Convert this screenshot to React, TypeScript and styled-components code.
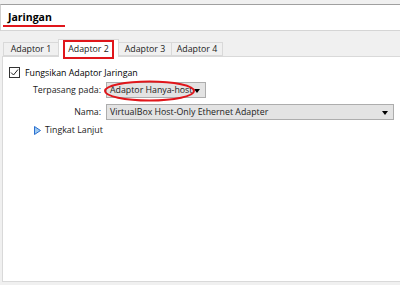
import React from "react";
import styled, { createGlobalStyle } from "styled-components";

const Global = createGlobalStyle`
  html, body { margin: 0; padding: 0; background: #f0f0f0; }
  body { font-family: "Open Sans", "Liberation Sans", sans-serif; font-size: 8.8px; color: #000; }
  * { box-sizing: border-box; }
`;

const Page = styled.div`
  width: 400px;
  height: 285px;
  display: flex;
  flex-direction: column;
  padding-top: 4px;
  overflow: hidden;
  white-space: nowrap;
`;

const Header = styled.div`
  height: 27px;
  background: #fff;
  border-top: 1px solid #a0a0a0;
  border-left: 1px solid #d0d0d0;
  border-bottom: 1px solid #d5d5d5;
  display: flex;
  align-items: center;
  padding-left: 7px;
`;

const Title = styled.span`
  position: relative;
  font-weight: 700;
  font-size: 10.5px;
  margin-top: -2px;
  &::after {
    content: "";
    position: absolute;
    left: -5px;
    right: -13px;
    bottom: -3px;
    height: 2px;
    background: #e0161b;
  }
`;

const TabStrip = styled.div`
  height: 25px;
  display: flex;
  align-items: flex-end;
  padding-left: 4px;
  position: relative;
  z-index: 1;
`;

const Tab = styled.div<{ $active?: boolean; $w: number }>`
  width: ${(p) => p.$w}px;
  height: ${(p) => (p.$active ? 18 : 14)}px;
  margin-bottom: ${(p) => (p.$active ? -1 : 0)}px;
  background: ${(p) => (p.$active ? "#fff" : "#f0f0f0")};
  border: 1px solid #d9d9d9;
  border-bottom: ${(p) => (p.$active ? "none" : "1px solid #d9d9d9")};
  margin-left: -1px;
  display: flex;
  align-items: center;
  justify-content: center;
  color: #222;
`;

const Marked = styled.span`
  border: 2px solid #e0161b;
  padding: 0 3px;
  line-height: 15px;
  margin-top: 1px;
`;

const Pane = styled.div`
  flex: 1;
  margin-left: 2px;
  margin-bottom: 3px;
  background: #fff;
  border: 1px solid #d9d9d9;
  border-right: none;
  padding: 9px 0 0 6px;
  display: flex;
  flex-direction: column;
`;

const CheckRow = styled.label`
  display: flex;
  align-items: center;
  gap: 5px;
  height: 13px;
`;

const Box = styled.span`
  width: 11px;
  height: 11px;
  border: 1px solid #333;
  background: #fff;
  display: flex;
  align-items: center;
  justify-content: center;
`;

const Form = styled.div`
  display: grid;
  grid-template-columns: 92px auto;
  column-gap: 5px;
  row-gap: 6px;
  margin-top: 3px;
  align-items: center;
`;

const Label = styled.span`
  text-align: right;
  color: #222;
`;

const Combo = styled.div<{ $w: number }>`
  position: relative;
  width: ${(p) => p.$w}px;
  height: 16px;
  background: #e3e3e3;
  border: 1px solid #adadad;
  display: flex;
  align-items: center;
  padding-left: 3px;
  color: #222;
`;

const Arrow = styled.span`
  position: absolute;
  right: 5px;
  top: 6px;
  width: 0;
  height: 0;
  border-left: 3.5px solid transparent;
  border-right: 3.5px solid transparent;
  border-top: 4px solid #000;
`;

const Ellipse = styled.svg`
  position: absolute;
  left: -3px;
  top: -3px;
`;

const Advanced = styled.div`
  display: flex;
  align-items: center;
  gap: 4px;
  margin-top: 4px;
  margin-left: 25px;
  color: #222;
`;

export default function App() {
  return (
    <>
      <Global />
      <Page>
        <Header>
          <Title>Jaringan</Title>
        </Header>
        <TabStrip>
          <Tab $w={56}>Adaptor 1</Tab>
          <Tab $w={61} $active>
            <Marked>Adaptor 2</Marked>
          </Tab>
          <Tab $w={54}>Adaptor 3</Tab>
          <Tab $w={52}>Adaptor 4</Tab>
        </TabStrip>
        <Pane>
          <CheckRow>
            <Box>
              <svg width="9" height="9" viewBox="0 0 9 9">
                <path d="M1 4.5 L3.5 7 L8 1.5" fill="none" stroke="#222" strokeWidth="1" />
              </svg>
            </Box>
            Fungsikan Adaptor Jaringan
          </CheckRow>
          <Form>
            <Label>Terpasang pada:</Label>
            <Combo $w={100}>
              Adaptor Hanya-host
              <Arrow />
              <Ellipse width="91" height="22" viewBox="0 0 91 22">
                <ellipse cx="45.5" cy="11" rx="44.5" ry="9.5" fill="none" stroke="#e0161b" strokeWidth="2" />
              </Ellipse>
            </Combo>
            <Label>Nama:</Label>
            <Combo $w={288}>
              VirtualBox Host-Only Ethernet Adapter
              <Arrow />
            </Combo>
          </Form>
          <Advanced>
            <svg width="7" height="9" viewBox="0 0 7 9">
              <path d="M0.5 0.5 L6.5 4.5 L0.5 8.5 Z" fill="#9cc8f0" stroke="#2a6fd0" strokeWidth="1" />
            </svg>
            Tingkat Lanjut
          </Advanced>
        </Pane>
      </Page>
    </>
  );
}
